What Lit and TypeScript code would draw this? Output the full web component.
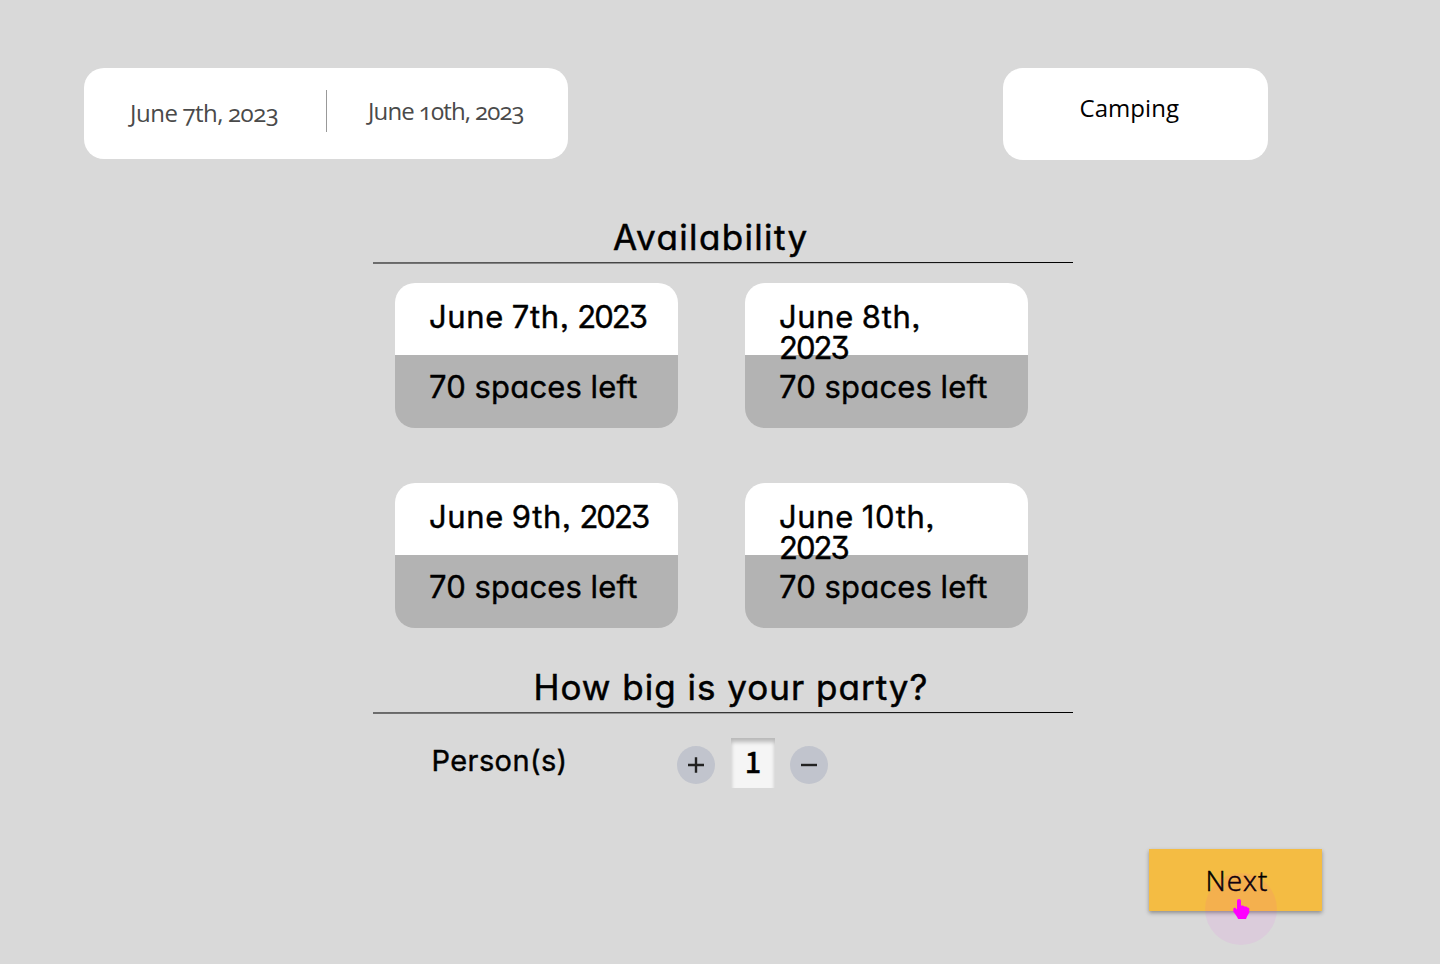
import { LitElement, html, css } from "lit";
import { customElement, property } from "lit/decorators.js";

interface Slot {
  month: string;
  day: string;
  year: string;
  wrap: boolean;
  left: number;
}

@customElement("section-title")
export class SectionTitle extends LitElement {
  static styles = css`
    :host { display: block; width: 700px; height: 50px; }
    .text {
      height: 46px;
      line-height: 44px;
      font-size: 35px;
      white-space: nowrap;
      -webkit-text-stroke: 0.5px #000;
    }
    .rule { display: block; }
  `;

  render() {
    return html`
      <div class="text"><slot></slot></div>
      <svg class="rule" width="700" height="4" viewBox="0 0 700 4">
        <line x1="0" y1="2" x2="700" y2="1.5" stroke="#000" stroke-width="1" />
      </svg>
    `;
  }
}

@customElement("day-card")
export class DayCard extends LitElement {
  @property({ attribute: false }) slotInfo!: Slot;

  static styles = css`
    :host {
      display: block;
      height: 145px;
      font-size: 31px;
      line-height: 31px;
      white-space: nowrap;
      -webkit-text-stroke: 0.4px #000;
    }
    .date {
      position: relative;
      z-index: 1;
      box-sizing: border-box;
      height: 72px;
      padding: 18px 0 0 34px;
      border-radius: 20px 20px 0 0;
      background: #fff;
      letter-spacing: 0.6px;
      word-spacing: -1.3px;
    }
    .year { letter-spacing: -1.95px; }
    .left {
      box-sizing: border-box;
      height: 73px;
      padding: 16px 0 0 34px;
      border-radius: 0 0 20px 20px;
      background: #b3b3b3;
      letter-spacing: 0.2px;
      word-spacing: -0.5px;
    }
  `;

  render() {
    const { month, day, year, wrap, left } = this.slotInfo;
    return html`
      <div class="date">${month} ${day},${wrap ? html`<br />` : " "}<span class="year">${year}</span></div>
      <div class="left">${left} spaces left</div>
    `;
  }
}

@customElement("app-root")
export class AppRoot extends LitElement {
  private days: Slot[] = [
    { month: "June", day: "7th", year: "2023", wrap: false, left: 70 },
    { month: "June", day: "8th", year: "2023", wrap: true, left: 70 },
    { month: "June", day: "9th", year: "2023", wrap: false, left: 70 },
    { month: "June", day: "10th", year: "2023", wrap: true, left: 70 },
  ];

  static styles = css`
    :host {
      display: block;
      box-sizing: border-box;
      height: 964px;
      padding-top: 68px;
      overflow: hidden;
      background: #d9d9d9;
      color: #000;
      font-family: "Inter", "Liberation Sans", sans-serif;
      font-feature-settings: "cv11", "cv09", "ss03";
    }
    .top {
      display: flex;
      justify-content: space-between;
      height: 92px;
      margin: 0 172px 0 84px;
      font-family: "Open Sans", sans-serif;
      font-feature-settings: "onum";
      white-space: nowrap;
    }
    .range {
      display: flex;
      box-sizing: border-box;
      width: 484px;
      height: 91px;
      padding: 22px 0 0 46px;
      border-radius: 20px;
      background: #fff;
      color: #4a4a4a;
      font-size: 24px;
      line-height: 45px;
    }
    .from { width: 196px; letter-spacing: -0.5px; word-spacing: -0.7px; }
    .to {
      height: 42px;
      border-left: 1px solid #999;
      padding-left: 41px;
      line-height: 42px;
      letter-spacing: -0.85px;
      word-spacing: -0.6px;
    }
    .kind {
      box-sizing: border-box;
      width: 265px;
      height: 92px;
      padding: 20px 0 0 76.5px;
      border-radius: 20px;
      background: #fff;
      font-size: 24px;
      line-height: 40px;
      letter-spacing: 0.05px;
    }
    .booking { width: 700px; margin: 55px 0 0 373px; }
    .availability { text-indent: 240px; letter-spacing: 1.35px; }
    .party { margin-top: 37px; text-indent: 160.5px; letter-spacing: 1px; }
    .days {
      display: grid;
      grid-template-columns: 283px 283px;
      gap: 55px 67px;
      margin: 18px 0 0 22px;
    }
    .people { display: flex; height: 52px; margin-top: 23px; }
    .label {
      width: 245.5px;
      padding: 5px 0 0 58.5px;
      font-size: 29px;
      line-height: 36px;
      letter-spacing: 0.4px;
      -webkit-text-stroke: 0.4px #000;
    }
    .step {
      width: 38px;
      height: 38px;
      margin-top: 8px;
      padding: 0;
      border: 0;
      border-radius: 50%;
      background: #c1c4cd;
    }
    .step svg { display: block; }
    .count {
      width: 44px;
      height: 50px;
      margin: 0 15px 0 16px;
      background: #f5f5f5;
      box-shadow: inset 0 4px 4px rgba(0, 0, 0, 0.25);
      font: 500 29px/44px "Noto Sans CJK JP", sans-serif;
      text-align: center;
      -webkit-text-stroke: 0.3px #000;
    }
    .next {
      position: relative;
      width: 173px;
      height: 62px;
      margin: 59px 0 0 1149px;
      background: #f4bc43;
      box-shadow: 0 2px 4px rgba(0, 0, 0, 0.35);
      font: 300 28px/62px "Open Sans", sans-serif;
      letter-spacing: 1px;
      text-indent: 56.5px;
      -webkit-text-stroke: 0.5px #000;
    }
    .pointer { position: absolute; left: 56px; top: 24px; }
  `;

  render() {
    return html`
      <div class="top">
        <div class="range">
          <div class="from">June 7th, 2023</div>
          <div class="to">June 10th, 2023</div>
        </div>
        <div class="kind">Camping</div>
      </div>
      <div class="booking">
        <section-title class="availability">Availability</section-title>
        <div class="days">
          ${this.days.map((d) => html`<day-card .slotInfo=${d}></day-card>`)}
        </div>
        <section-title class="party">How big is your party?</section-title>
        <div class="people">
          <div class="label">Person(s)</div>
          <button class="step" aria-label="Add">
            <svg width="38" height="38" viewBox="0 0 38 38">
              <path d="M11 19H27M19 11.2V26.8" stroke="#222" stroke-width="2.4" />
            </svg>
          </button>
          <div class="count">1</div>
          <button class="step" aria-label="Remove">
            <svg width="38" height="38" viewBox="0 0 38 38">
              <path d="M11 19H27" stroke="#222" stroke-width="2.4" />
            </svg>
          </button>
        </div>
      </div>
      <div class="next">
        Next
        <svg class="pointer" width="72" height="72" viewBox="0 0 72 72">
          <circle cx="36" cy="36" r="36" fill="#f0f" fill-opacity="0.06" />
          <path
            fill="#f0f"
            d="M32 28Q32 26 34 26T36 28V32.6L38 32.4L39.5 33.4L41.5 33.4L42.5 34.6L44 35Q44.4 35.4 44.3 36.5V39.5L42 43.5L41 46H33.2L31.5 43L28.3 38.5V35.5L30 34.6L32 36.5Z"
          />
        </svg>
      </div>
    `;
  }
}
